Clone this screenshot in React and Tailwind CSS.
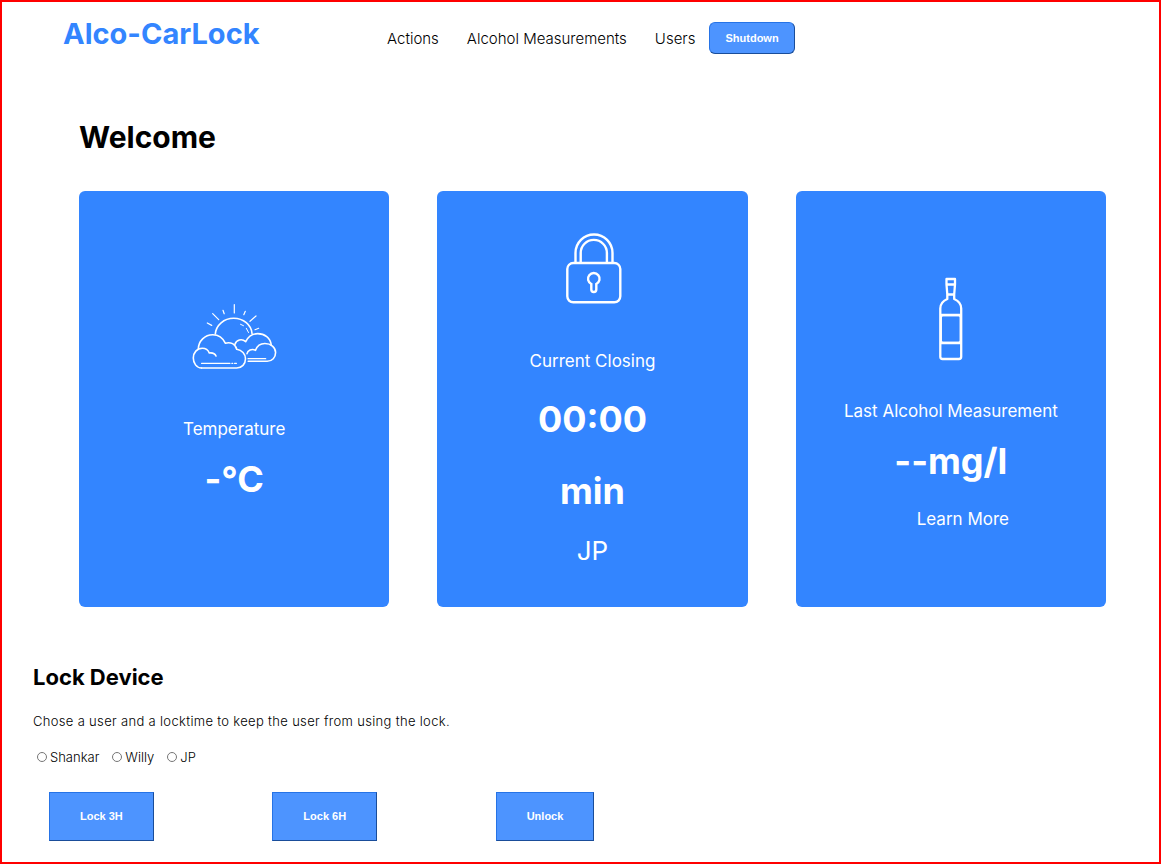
import React from 'react';

const users = ['Shankar', 'Willy', 'JP'];

const WeatherIcon = () => (
  <svg className="size-[100px]" viewBox="0 0 100 100" fill="none" stroke="white" strokeWidth="1.6" strokeLinecap="round" strokeLinejoin="round" aria-hidden="true">
    {/* sun and rays */}
    <path d="M31.3 47C32 38 40 31.3 49.7 31.3S67.4 38 68 46.5" />
    <path d="M56.5 37.3l3 1.4M62.3 41.3l2.2 4.2" strokeWidth="1" />
    <path d="M50.3 17.5V26M39 23.3l1.2 3.5M28.7 26.7l6 6M23.3 36l4.4 2.4M61.3 24.3l-1.5 3.4M72 29l-6 5.3M74.7 41.3L71 42.7" strokeWidth="1.2" />
    {/* front cloud */}
    <path d="M17.5 81C12.5 81 9.3 76 9.3 71c0-5.5 3.7-9.7 9-9.7 3.4 0 5.8 1.7 7 4.7 3.2-.4 5.7.6 6.7 3" />
    <path d="M14.3 62C14.5 54 20.8 47.7 28.7 47.7c5.6 0 10.3 3.4 12.6 8.500 5.2-1.6 10.2.8 11.4 6 5.2.8 8.8 4.8 8.8 9.6 0 5.2-3.7 9.2-8.8 9.2H17.5" />
    <path d="M17.5 76.3H46M47.8 76.3h1M50.5 76.3h2" strokeWidth="1.2" />
    {/* back cloud */}
    <path d="M51 57.3c1.300-4.2 6.6-6.3 10.7-2.6 2.4-5.2 6.6-8.1 12-8.1 7 0 12.6 4.4 13.5 11.1" />
    <path d="M63 66.7c.6-3.3 4.6-5.3 8.5-3.4 1.5-4.2 5-6.8 9.4-6.8 6 0 10.7 3.7 10.7 9 0 5-3.4 8.6-8.4 8.7l-19 .1" />
    <path d="M64 71.7h17.7" strokeWidth="1.2" />
  </svg>
);

const LockIcon = () => (
  <svg className="size-[100px]" viewBox="0 0 100 100" fill="none" stroke="white" strokeWidth="2.4" aria-hidden="true">
    <rect x="25.3" y="44" width="53" height="39.3" rx="6" />
    <path d="M33.5 44V34a18.5 18.5 0 0 1 37 0v10M38.7 44V34a13.1 13.1 0 0 1 26.2 0v10" />
    <path d="M49.3 65a5.8 5.8 0 1 1 5 0v5.5a2.5 2.5 0 0 1-5 0z" />
  </svg>
);

const BottleIcon = () => (
  <svg className="size-[100px]" viewBox="0 2 100 100" fill="none" stroke="white" strokeWidth="2.3" strokeLinejoin="round" aria-hidden="true">
    <path d="M45.5 12H54v5.5l-.8 10v4.5c4.2 1.800 7 4.600 7 9.5v48.2a2.3 2.3 0 0 1-2.3 2.3H41.600a2.3 2.3 0 0 1-2.3-2.3V41.500c0-4.900 2.800-7.700 7-9.500v-4.500l-.8-10z" />
    <path d="M45.5 17.5H54M46.3 27.5h6.900M39.3 48h20.900M39.3 76h20.900" />
    <rect x="40.2" y="48.5" width="19.100" height="27" rx="2" strokeWidth="1.5" />
  </svg>
);

const Card = ({ icon, label, children }) => (
  <section className="flex min-h-[416px] flex-col items-center justify-center rounded-md bg-[#3385ff] pb-1 text-center text-white">
    {icon}
    <p className="mt-5 text-[17px] leading-11">{label}</p>
    {children}
  </section>
);

const LockButton = ({ children }) => (
  <button
    type="button"
    className="border border-t-[#2673e6] border-r-[#1a4d99] border-b-[#1a4d99] border-l-[#2673e6] bg-[#4d94ff] px-[30px] py-4 font-['Liberation_Sans',sans-serif] text-[11px] leading-[15px] font-bold text-white"
  >
    {children}
  </button>
);

const App = () => (
  <div className="min-h-screen border-2 border-[#ff0000] bg-white font-[Inter,sans-serif] text-black">
    <header className="flex items-center pt-3 pl-[61px]">
      <h1 className="w-[324px] text-[29px] leading-10 font-bold text-[#3385ff]">Alco-CarLock</h1>
      <nav className="flex items-center gap-7 pt-[10px] text-[15px] font-light">
        <a href="#actions">Actions</a>
        <a href="#measurements">Alcohol Measurements</a>
        <a href="#users">Users</a>
      </nav>
      <button
        type="button"
        className="mt-2 ml-[14px] rounded-md border border-t-[#2673e6] border-r-[#1a4d99] border-b-[#1a4d99] border-l-[#2673e6] bg-[#4d94ff] px-[15px] py-2 font-['Liberation_Sans',sans-serif] text-[11px] leading-[14px] font-bold text-white"
      >
        Shutdown
      </button>
    </header>

    <main>
      <div className="pt-[63px] pr-[53px] pl-[77px]">
        <h2 className="text-[30px] leading-10 font-bold">Welcome</h2>
        <div className="mt-[34px] grid grid-cols-3 gap-12">
          <Card icon={<WeatherIcon />} label="Temperature">
            <p className="text-4xl leading-14 font-bold">-°C</p>
          </Card>
          <Card icon={<LockIcon />} label="Current Closing">
            <p className="text-4xl leading-18 font-bold">
              00:00
              <br />
              min
            </p>
            <p className="text-[26px] leading-12">JP</p>
          </Card>
          <Card icon={<BottleIcon />} label="Last Alcohol Measurement">
            <p className="text-4xl leading-14 font-bold">--mg/l</p>
            <a href="#measurements" className="mt-5 -mb-1 pl-6 text-[17px] leading-5">
              Learn More
            </a>
          </Card>
        </div>
      </div>

      <section id="actions" className="px-[31px] pt-14">
        <h2 className="text-[22px] leading-7 font-bold">Lock Device</h2>
        <p className="mt-5 text-[13px] leading-5 font-light tracking-wide">
          Chose a user and a locktime to keep the user from using the lock.
        </p>
        <div className="mt-4 flex gap-[13px] pl-1 text-[13px] leading-5 font-light">
          {users.map((user) => (
            <label key={user} className="flex items-center gap-[3px]">
              <input
                type="radio"
                name="user"
                value={user}
                className="size-[10px] appearance-none rounded-full border border-[#767676] bg-white checked:bg-[#3385ff]"
              />
              {user}
            </label>
          ))}
        </div>
        <div className="mt-[25px] grid max-w-[686px] grid-cols-3 justify-items-start pl-4">
          <LockButton>Lock 3H</LockButton>
          <LockButton>Lock 6H</LockButton>
          <LockButton>Unlock</LockButton>
        </div>
      </section>
    </main>
  </div>
);

export default App;
